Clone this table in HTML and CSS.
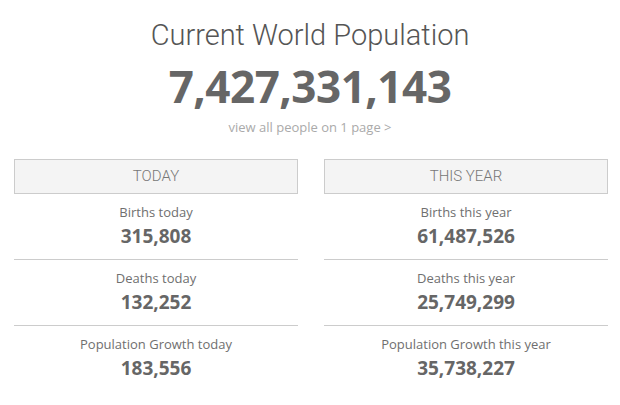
FILE: index.html
```html
<!DOCTYPE html>
<html lang="en">
<head>
    <meta charset="UTF-8">
    <meta name="viewport" content="width=device-width, initial-scale=1.0">
    <title>Current World Population</title>
    <link rel="stylesheet" href="styles.css">
</head>
<body>
    <div class="counter">
        <h1>Current World Population</h1>
        <div class="total">7,427,331,143</div>
        <a class="view-all" href="#">view all people on 1 page &gt;</a>
    </div>
    <div class="columns">
        <div class="column">
            <div class="col-head">Today</div>
            <div class="stat">
                <div class="stat-label">Births today</div>
                <div class="stat-num">315,808</div>
            </div>
            <div class="stat">
                <div class="stat-label">Deaths today</div>
                <div class="stat-num">132,252</div>
            </div>
            <div class="stat">
                <div class="stat-label">Population Growth today</div>
                <div class="stat-num">183,556</div>
            </div>
        </div>
        <div class="column">
            <div class="col-head">This year</div>
            <div class="stat">
                <div class="stat-label">Births this year</div>
                <div class="stat-num">61,487,526</div>
            </div>
            <div class="stat">
                <div class="stat-label">Deaths this year</div>
                <div class="stat-num">25,749,299</div>
            </div>
            <div class="stat">
                <div class="stat-label">Population Growth this year</div>
                <div class="stat-num">35,738,227</div>
            </div>
        </div>
    </div>
</body>
</html>
```

FILE: styles.css
```css
body {
    font-family: "Open Sans", Arial, sans-serif;
    margin: 0;
    padding: 0;
    background-color: #fff;
    color: #666;
}
.counter {
    text-align: center;
    padding-top: 15px;
}
h1 {
    font-family: Roboto, Arial, sans-serif;
    font-weight: 300;
    font-size: 29px;
    line-height: 40px;
    margin: 0 0 3px;
    color: #555;
}
.total {
    font-weight: 700;
    font-size: 44px;
    line-height: 56px;
    color: #666;
    letter-spacing: -0.5px;
}
.view-all {
    display: inline-block;
    margin-top: 4px;
    font-size: 13px;
    color: #aaa;
    text-decoration: none;
}
.columns {
    display: flex;
    gap: 26px;
    padding: 22px 12px 0 14px;
}
.column {
    flex: 1;
}
.col-head {
    background-color: #f4f4f4;
    border: 1px solid #ccc;
    font-family: Roboto, Arial, sans-serif;
    font-weight: 300;
    font-size: 15px;
    text-transform: uppercase;
    text-align: center;
    line-height: 33px;
    color: #777;
}
.stat {
    text-align: center;
    padding: 8px 0 9px;
    border-bottom: 1px solid #ccc;
}
.stat:last-child {
    border-bottom: none;
}
.stat-label {
    font-size: 13px;
    line-height: 20px;
    color: #6f6f6f;
}
.stat-num {
    font-weight: 700;
    font-size: 19px;
    line-height: 28px;
}
```
